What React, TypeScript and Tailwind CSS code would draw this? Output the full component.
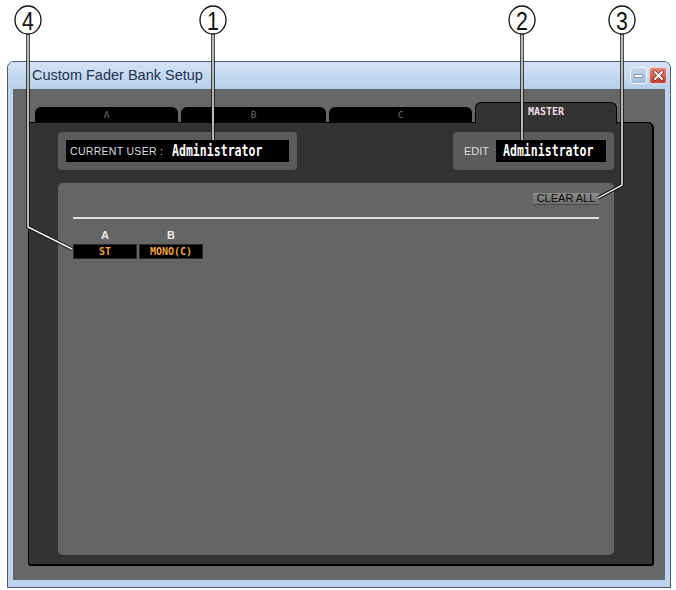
import React from "react";

const tabs = ["A", "B", "C"];

const faders = [
    { bank: "A", name: "ST" },
    { bank: "B", name: "MONO(C)" },
];

// numbered callouts drawn over the window
const callouts = [
    { n: "4", cx: 28, pts: "28,34 28,227 72,249" },
    { n: "1", cx: 213, pts: "213,34 213,140" },
    { n: "2", cx: 522, pts: "522,34 522,140" },
    { n: "3", cx: 622, pts: "622,34 622,185 598,198" },
];

function Callouts() {
    return (
        <svg
            className="absolute inset-0 z-20 pointer-events-none"
            width={676}
            height={590}
            viewBox="0 0 676 590"
        >
            {callouts.map((c) => (
                <g key={c.n}>
                    <polyline points={c.pts} fill="none" stroke="#111" strokeWidth={3.5} />
                    <polyline points={c.pts} fill="none" stroke="#fff" strokeWidth={1.4} />
                    <ellipse cx={c.cx} cy={20} rx={13} ry={14} fill="#fff" stroke="#111" strokeWidth={1.3} />
                    <text
                        x={c.cx}
                        y={21}
                        textAnchor="middle"
                        dominantBaseline="central"
                        fontFamily="Liberation Sans, Arial, sans-serif"
                        fontSize={25}
                        fill="#111"
                        transform={`translate(${c.cx} 0) scale(0.85 1) translate(${-c.cx} 0)`}
                    >
                        {c.n}
                    </text>
                </g>
            ))}
        </svg>
    );
}

function TitleButtons() {
    return (
        <div className="ml-auto mr-[3px] flex gap-[2px]">
            <div className="w-[17px] h-[17px] rounded-[3px] border border-[#f4f8fc] bg-gradient-to-b from-[#c9d9ec] to-[#a3bbd8] flex items-center justify-center">
                <div className="w-[9px] h-[4px] rounded-[1px] bg-white border border-[#7d96b6]" />
            </div>
            <div className="w-[18px] h-[17px] rounded-[3px] border border-[#f1d3cf] bg-gradient-to-b from-[#e0877c] to-[#c23d31] flex items-center justify-center">
                <svg width="11" height="11" viewBox="0 0 11 11">
                    <path d="M2 2 L9 9 M9 2 L2 9" stroke="#7a2a22" strokeWidth="3.4" strokeLinecap="round" />
                    <path d="M2 2 L9 9 M9 2 L2 9" stroke="#fff" strokeWidth="2" strokeLinecap="round" />
                </svg>
            </div>
        </div>
    );
}

const mono = "font-['DejaVu_Sans_Mono',monospace]";

export default function App() {
    return (
        <div className="relative w-[676px] h-[590px] bg-white overflow-hidden font-['Liberation_Sans',Arial,sans-serif]">
            <Callouts />

            <div className="pt-[61px] pl-[7px]">
                {/* Window frame */}
                <div className="w-[664px] h-[527px] border border-[#4d5b6c] rounded-t-[7px] bg-[#bcd4ee] flex flex-col overflow-hidden">
                    <header className="h-[27px] shrink-0 flex items-center pl-[24px] bg-gradient-to-b from-[#d3e3f5] to-[#b8d0ea]">
                        <span className="text-[14.5px] text-[#1d3150] leading-none">Custom Fader Bank Setup</span>
                        <TitleButtons />
                    </header>

                    {/* Client area */}
                    <div className="mx-[5px] h-[491px] bg-[#676767] pl-[15px] pr-[11px] pt-[13px] pb-[14px] flex flex-col">
                        {/* Bank tabs */}
                        <div className="h-[20px] shrink-0 flex items-end pl-[7px] gap-[3px]">
                            {tabs.map((t, i) => (
                                <div
                                    key={t}
                                    className={`h-[15px] ${i === 1 ? "w-[145px]" : "w-[143px]"} bg-black rounded-t-[6px] flex items-center justify-center`}
                                >
                                    <span className={`${mono} text-[9.5px] text-[#6a6a6a] leading-none`}>{t}</span>
                                </div>
                            ))}
                            <div className="relative z-10 -mb-[2px] h-[22px] w-[142px] bg-[#333333] border border-b-0 border-black rounded-t-[6px] flex justify-center pt-[4px]">
                                <span className={`${mono} font-bold text-[10px] text-[#f3dde6] leading-none`}>MASTER</span>
                            </div>
                        </div>

                        {/* Bank panel */}
                        <div className="flex-1 bg-[#333333] border border-black border-r-2 border-b-2 rounded-tr-[6px] rounded-b-[3px] pl-[29px] pr-[38px] pt-[9px] pb-[9px] flex flex-col">
                            <div className="h-[38px] shrink-0 flex justify-between">
                                <div className="w-[239px] rounded-[4px] bg-[#5b5b5b] flex items-center px-[8px]">
                                    <div className="w-[223px] h-[22px] bg-black flex items-center pl-[4px]">
                                        <span className="w-[108px] text-[10.5px] tracking-[0.3px] text-[#dcdcdc] leading-none">CURRENT USER :</span>
                                        <span className={`${mono} inline-block font-bold text-[15px] text-white leading-none scale-x-[0.77] origin-left`}>
                                            Administrator
                                        </span>
                                    </div>
                                </div>
                                <div className="w-[161px] rounded-[4px] bg-[#5b5b5b] flex items-center pl-[11px]">
                                    <span className="w-[32px] text-[11px] text-[#dcdcdc] leading-none">EDIT</span>
                                    <div className="w-[110px] h-[22px] bg-black flex items-center pl-[7px]">
                                        <span className={`${mono} inline-block font-bold text-[15px] text-white leading-none scale-x-[0.77] origin-left`}>
                                            Administrator
                                        </span>
                                    </div>
                                </div>
                            </div>

                            {/* Fader assignment area */}
                            <div className="mt-[13px] flex-1 rounded-[5px] bg-[#656565] px-[15px] pt-[10px]">
                                <div className="flex justify-end">
                                    <button className="w-[66px] h-[12px] bg-gradient-to-b from-[#8e8e8e] to-[#6c6c6c] border-b border-[#4a4a4a] flex items-center justify-center text-[11px] text-[#0a0a0a] leading-none">
                                        CLEAR ALL
                                    </button>
                                </div>
                                <div className="mt-[12px] h-[2px] bg-[#dedede]" />
                                <div className="mt-[11px] flex gap-[2px]">
                                    {faders.map((f) => (
                                        <div key={f.bank} className="w-[64px] flex flex-col items-center">
                                            <span className="h-[12px] text-[11px] font-bold text-[#ececec] leading-none">{f.bank}</span>
                                            <div className="mt-[2px] w-full h-[15px] bg-black border border-[#2a2a2a] flex items-center justify-center">
                                                <span className={`${mono} font-bold text-[10px] text-[#f0a33c] leading-none`}>{f.name}</span>
                                            </div>
                                        </div>
                                    ))}
                                </div>
                            </div>
                        </div>
                    </div>
                </div>
            </div>
        </div>
    );
}
